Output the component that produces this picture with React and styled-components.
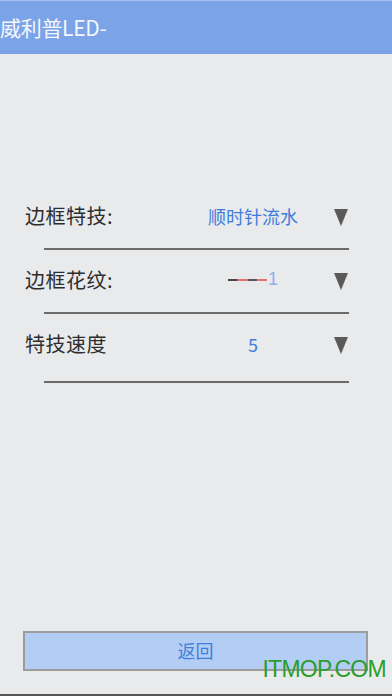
import styled, { createGlobalStyle } from "styled-components";

const GlobalStyle = createGlobalStyle`
  html, body {
    margin: 0;
    padding: 0;
    background: #e9eaec;
  }
  * {
    box-sizing: border-box;
  }
`;

const fields = [
  { label: "边框特技:", value: "顺时针流水", gap: 13 },
  { label: "边框花纹:", pattern: true, value: "1", gap: 13 },
  { label: "特技速度", value: "5", gap: 18 },
];

function Arrow() {
  return (
    <ArrowIcon viewBox="0 0 14 17">
      <path d="M0 0 H14 L7 17 Z" fill="#595959" />
    </ArrowIcon>
  );
}

function Pattern() {
  return (
    <PatternSvg viewBox="0 0 40 4">
      <rect x="0" y="1" width="10" height="2" fill="#444" />
      <rect x="10" y="1" width="10" height="2" fill="#e07070" />
      <rect x="20" y="1" width="10" height="2" fill="#555" />
      <rect x="30" y="1" width="10" height="2" fill="#e07070" />
    </PatternSvg>
  );
}

export default function App() {
  return (
    <Screen>
      <GlobalStyle />
      <Header>威利普LED-</Header>
      <Main>
        {fields.map((f) => (
          <Field key={f.label} $gap={f.gap}>
            <FieldRow>
              <Label>{f.label}</Label>
              <Value $light={f.pattern}>
                {f.pattern && <Pattern />}
                {f.value}
              </Value>
              <Arrow />
            </FieldRow>
            <Divider />
          </Field>
        ))}
      </Main>
      <Footer>
        <BackButton>返回</BackButton>
        <Watermark>ITMOP.COM</Watermark>
      </Footer>
    </Screen>
  );
}

const Screen = styled.div`
  width: 392px;
  height: 696px;
  display: flex;
  flex-direction: column;
  background: #e9eaec;
  font-family: "Noto Sans CJK SC", "Noto Sans", sans-serif;
  overflow: hidden;
`;

const Header = styled.div`
  height: 54px;
  flex-shrink: 0;
  display: flex;
  align-items: center;
  padding-bottom: 1px;
  background: #7aa3e8;
  border-top: 1px solid #a6c1ef;
  color: #f5f7fc;
  font-size: 21px;
  letter-spacing: -0.3px;
`;

const Main = styled.div`
  flex: 1;
  padding-top: 145px;
  display: flex;
  flex-direction: column;
`;

const Field = styled.div`
  display: flex;
  flex-direction: column;
  gap: ${(p) => p.$gap}px;
  margin-bottom: 13px;
`;

const FieldRow = styled.div`
  height: 36px;
  display: flex;
  align-items: center;
  padding: 0 44px 0 25px;
`;

const Label = styled.span`
  flex: 1;
  padding-bottom: 3px;
  font-size: 20px;
  color: #2e2e2e;
  letter-spacing: 0.5px;
`;

const Value = styled.span`
  width: 120px;
  margin-right: 21px;
  padding-bottom: 3px;
  display: flex;
  align-items: center;
  justify-content: center;
  font-size: 18px;
  color: ${(p) => (p.$light ? "#8fb2ec" : "#3d7ddc")};
  font-family: ${(p) =>
    p.$light ? '"Liberation Sans", sans-serif' : '"Noto Sans CJK SC", sans-serif'};
`;

const PatternSvg = styled.svg`
  width: 39px;
  height: 4px;
  margin-right: 1px;
`;

const ArrowIcon = styled.svg`
  width: 14px;
  height: 17px;
  flex-shrink: 0;
`;

const Divider = styled.div`
  height: 2px;
  margin: 0 43px 0 44px;
  background: #6b6b6b;
`;

const Footer = styled.div`
  position: relative;
  padding: 0 24px 23px 23px;
  border-bottom: 2px solid #555;
`;

const BackButton = styled.button`
  display: block;
  width: 100%;
  height: 40px;
  background: #b3cdf5;
  border: 2px solid #9c9c9c;
  color: #3f7fdc;
  font-family: "Noto Sans CJK SC", sans-serif;
  font-size: 18px;
  padding: 0 0 2px;
`;

const Watermark = styled.div`
  position: absolute;
  right: 6px;
  bottom: 13px;
  color: #2a9e2a;
  font-family: "Liberation Sans", sans-serif;
  font-size: 23px;
  letter-spacing: -0.7px;
  line-height: 1;
`;
